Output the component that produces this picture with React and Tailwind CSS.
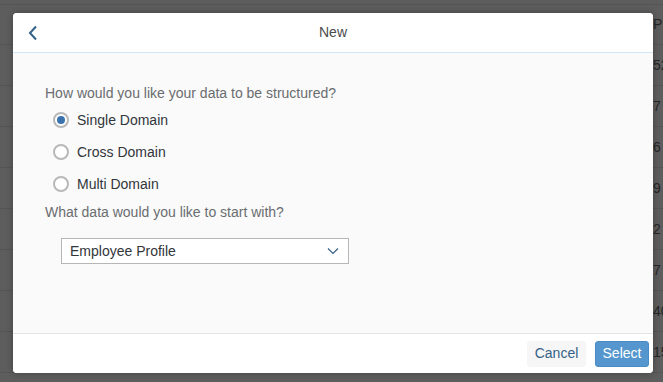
import React, { useState } from "react";

const rows = ["52", "7", "6", "9", "2", "7", "40", "15"];

const options = ["Single Domain", "Cross Domain", "Multi Domain"];

const Radio = ({ checked, label, onSelect }) => (
  <div onClick={onSelect} className="flex h-[32px] cursor-pointer items-center">
    <span className="flex h-[16px] w-[16px] items-center justify-center rounded-full border-2 border-[#b8b8b8] bg-white">
      {checked && <span className="h-[8px] w-[8px] rounded-full bg-[#3a72ad]" />}
    </span>
    <span className="ml-[8px] text-[14px] text-[#32363a]">{label}</span>
  </div>
);

const App = () => {
  const [choice, setChoice] = useState("Single Domain");

  return (
    <div className="relative h-[382px] w-[663px] overflow-hidden bg-[#5d5d5d] font-['Liberation_Sans',sans-serif]">
      {/* page behind the overlay */}
      <div className="h-[4px]" />
      <div className="flex h-[41px] items-center border-y border-[#545454] text-[14px] text-[#262626]">
        <div className="flex-1" />
        <div className="w-[10px] whitespace-nowrap">Pl</div>
      </div>
      {rows.map((n, i) => (
        <div
          key={i}
          className="flex h-[41px] items-center border-b border-[#545454] text-[14px] text-[#262626]"
        >
          <div className="flex-1" />
          <div className="w-[10px] whitespace-nowrap">{n}</div>
        </div>
      ))}

      {/* dialog */}
      <div className="absolute left-[13px] top-[13px] flex h-[360px] w-[640px] flex-col overflow-hidden rounded-[4px] bg-white shadow-[0_0_6px_rgba(0,0,0,0.3)]">
        <div className="relative flex h-[40px] shrink-0 items-center justify-center border-b border-[#d1e6f7] bg-white">
          <button className="absolute left-[12px] top-[9px] flex h-[22px] w-[16px] items-center justify-center text-[#346187]">
            <svg width="10" height="16" viewBox="0 0 10 16" fill="none">
              <path d="M8 1.5L2 8l6 6.5" stroke="currentColor" strokeWidth="2" />
            </svg>
          </button>
          <span className="text-[14px] text-[#4a4c4e]">New</span>
        </div>

        <div className="flex-1 bg-[#fafafa] pl-[32px] pt-[30px]">
          <div className="h-[20px] text-[14px] leading-[20px] text-[#6a6d70]">
            How would you like your data to be structured?
          </div>
          <div className="ml-[8px] mt-[1px]">
            {options.map((o) => (
              <Radio key={o} label={o} checked={choice === o} onSelect={() => setChoice(o)} />
            ))}
          </div>
          <div className="mt-[2px] h-[20px] text-[14px] leading-[20px] text-[#6a6d70]">
            What data would you like to start with?
          </div>
          <div className="ml-[16px] mt-[16px] flex h-[26px] w-[288px] items-center justify-between border border-[#b6b6b6] bg-white pl-[8px] pr-[9px]">
            <span className="text-[14px] text-[#32363a]">Employee Profile</span>
            <svg width="12" height="8" viewBox="0 0 12 8" fill="none" className="text-[#346187]">
              <path d="M1 1.5l5 5 5-5" stroke="currentColor" strokeWidth="1.2" />
            </svg>
          </div>
        </div>

        <div className="flex h-[40px] shrink-0 items-center justify-end gap-[9px] border-t border-[#e5e5e5] bg-white pr-[4px]">
          <button className="h-[26px] w-[59px] rounded-[3px] bg-[#f6f6f6] text-[14px] text-[#346187]">
            Cancel
          </button>
          <button className="h-[26px] w-[54px] rounded-[3px] border border-[#4a8bc4] bg-[#5496cd] text-[14px] text-white">
            Select
          </button>
        </div>
      </div>
    </div>
  );
};

export default App;
